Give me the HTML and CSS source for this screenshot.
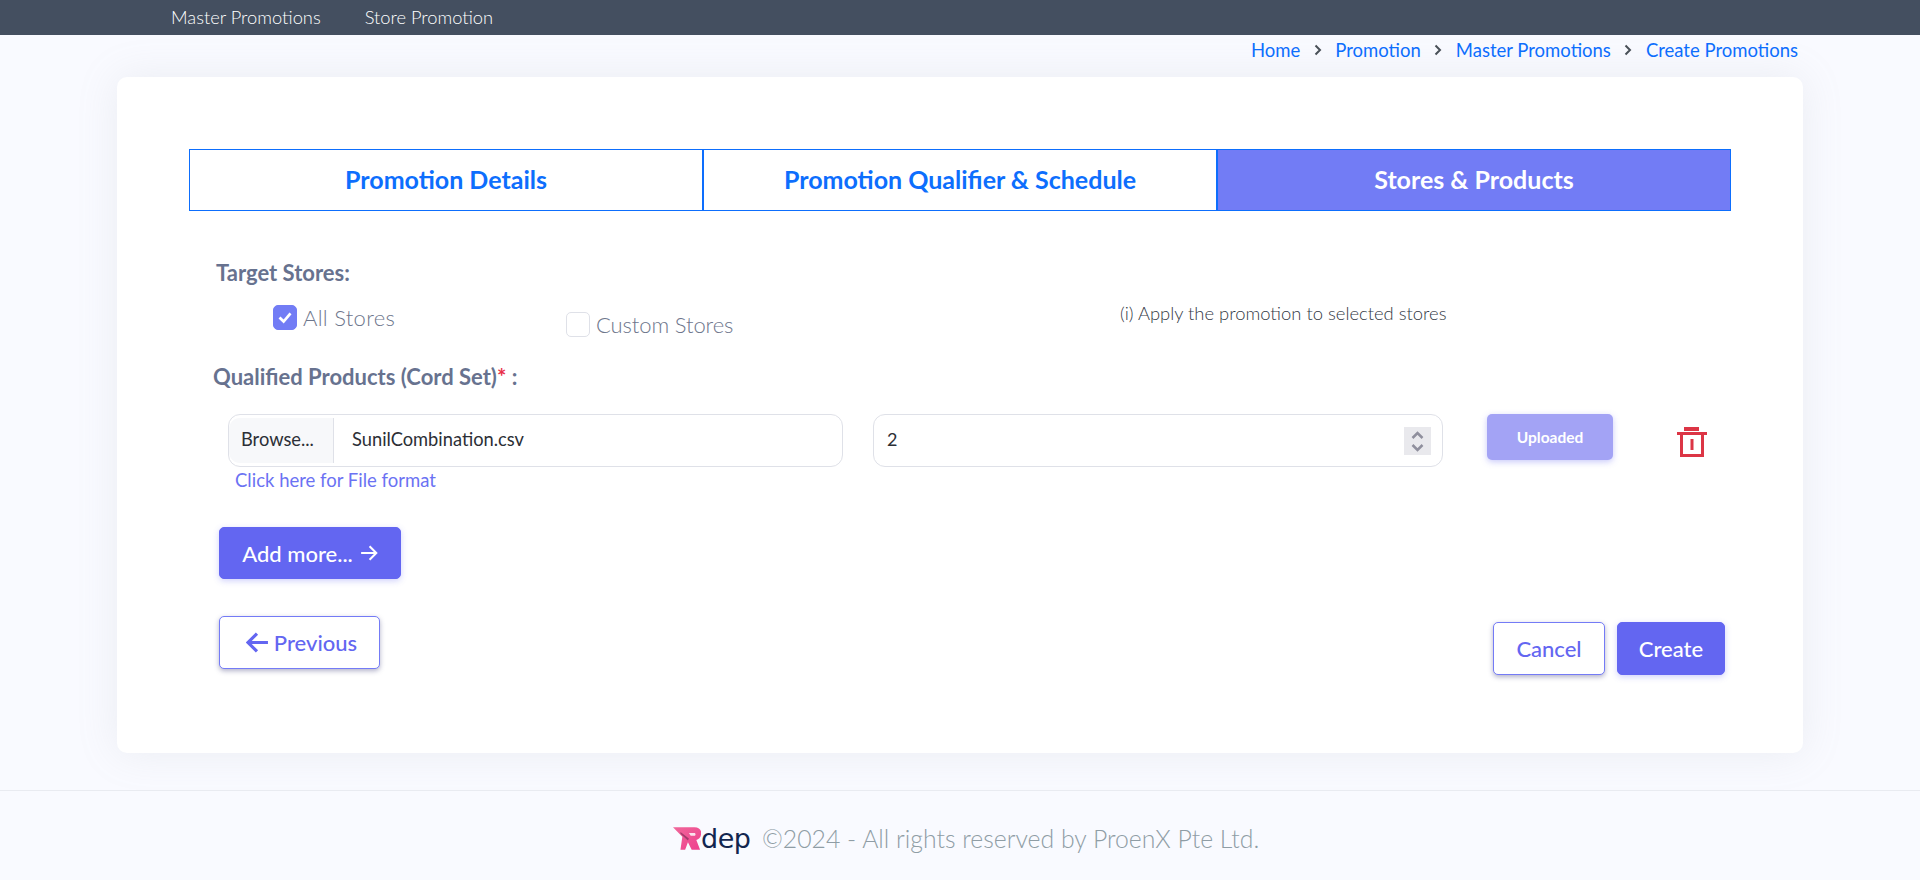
FILE: index.html
```html
<!DOCTYPE html>
<html>
  <head>
    <title>Create Promotions</title>
    <link rel="stylesheet" href="styles.css">
  </head>
  <body>
    <nav class="topnav">
      <a class="topnav-link">Master Promotions</a>
      <a class="topnav-link">Store Promotion</a>
    </nav>

    <div class="crumbs">
      <a>Home</a>
      <svg class="crumb-sep" viewBox="0 0 8 12"><path d="M1.5 1.5 6 6l-4.500 4.500"/></svg>
      <a>Promotion</a>
      <svg class="crumb-sep" viewBox="0 0 8 12"><path d="M1.5 1.5 6 6l-4.500 4.500"/></svg>
      <a>Master Promotions</a>
      <svg class="crumb-sep" viewBox="0 0 8 12"><path d="M1.5 1.5 6 6l-4.500 4.500"/></svg>
      <a>Create Promotions</a>
    </div>

    <main class="card">
      <div class="tabs">
        <div class="tab">Promotion Details</div>
        <div class="tab">Promotion Qualifier &amp; Schedule</div>
        <div class="tab tab-active">Stores &amp; Products</div>
      </div>

      <h4 class="label label-target">Target Stores:</h4>
      <div class="stores">
        <div class="store store-all">
          <span class="check check-on">
            <svg viewBox="0 0 24 24"><path d="M6 12.500 10.500 17 18 8"/></svg>
          </span>
          All Stores
        </div>
        <div class="store store-custom">
          <span class="check"></span>
          Custom Stores
        </div>
        <div class="store-info">(i) Apply the promotion to selected stores</div>
      </div>

      <h4 class="label label-products">Qualified Products (Cord Set)<span class="req">*</span> :</h4>
      <div class="upload-row">
        <div class="file-input">
          <span class="file-btn">Browse...</span>
          <span class="file-name">SunilCombination.csv</span>
        </div>
        <div class="num-input">
          <span class="num-value">2</span>
          <span class="spinner">
            <svg viewBox="0 0 27 28"><path d="M8.500 11 13.500 6l5 5M8.500 18l5 5 5-5"/></svg>
          </span>
        </div>
        <button class="btn-uploaded">Uploaded</button>
        <svg class="trash" viewBox="0 0 30 31">
          <rect x="7" y="0" width="15" height="4"/>
          <rect x="0" y="5" width="30" height="3"/>
          <rect x="13.500" y="12" width="3" height="11"/>
          <path class="trash-body" d="M4.500 8v20.500h21V8"/>
        </svg>
      </div>
      <a class="format-link">Click here for File format</a>

      <button class="btn btn-solid btn-add">
        Add more...
        <svg class="arrow-sm" viewBox="0 0 16 14"><path d="M1 7h13.500M8.500 1l6 6-6 6"/></svg>
      </button>

      <div class="form-foot">
        <button class="btn btn-line btn-prev">
          <svg class="arrow-lg" viewBox="0 0 22 20"><path d="M21 10H2M10.500 1.500 2 10l8.500 8.500"/></svg>
          Previous
        </button>
        <div class="form-actions">
          <button class="btn btn-line btn-cancel">Cancel</button>
          <button class="btn btn-solid btn-create">Create</button>
        </div>
      </div>
    </main>

    <footer class="footer">
      <span class="logo">
        <svg class="logo-mark" viewBox="0 0 30 25">
          <defs>
            <linearGradient id="logoPink" x1="0" y1="0" x2="1" y2="1">
              <stop offset="0" stop-color="#f0679a"/>
              <stop offset="1" stop-color="#ee3f8e"/>
            </linearGradient>
          </defs>
          <path fill="url(#logoPink)" d="M0 0h23c6 0 8 4 7 8-.5 3-2.500 5-5 5.500L29 24h-9l-4-8-3 8H8l2-14z"/>
          <path fill="#a23b6a" d="M8 5l9 7-1 2-8-7z"/>
          <path fill="#fbe3ee" d="M17 6h6c1.500 0 1.500 3 0 3h-4z"/>
        </svg>
        <span class="logo-text">dep</span>
      </span>
      <span class="copy">©2024 - All rights reserved by ProenX Pte Ltd.</span>
    </footer>
  </body>
</html>
```

FILE: styles.css
```css
:root {
  --primary: #6366f1;
  --link: #0d6efd;
  --label: #67728f;
  --field-line: #dfe1e8;
}

* {
  box-sizing: border-box;
}

body {
  margin: 0;
  height: 880px;
  overflow: hidden;
  background: #f9faff;
  font-family: Lato, "Open Sans", sans-serif;
}

.topnav {
  height: 35px;
  background: #444f60;
  padding: 0 0 2px 171px;
  display: flex;
  align-items: center;
  gap: 44px;
}

.topnav-link {
  color: #fff;
  font-size: 18.300px;
  font-weight: 300;
}

.crumbs {
  height: 42px;
  padding: 3px 122px 0 0;
  display: flex;
  justify-content: flex-end;
  align-items: flex-start;
  gap: 13.500px;
  color: var(--link);
  font-size: 18.500px;
  line-height: 24px;
}

.crumb-sep {
  width: 8px;
  height: 12px;
  margin-top: 6px;
  fill: none;
  stroke: #495057;
  stroke-width: 2;
}

.card {
  width: 1686px;
  height: 676px;
  margin: 0 auto 37px;
  padding: 72px 72px 78px;
  background: #fff;
  border-radius: 10px;
  box-shadow: 0 0 40px rgba(154, 161, 171, 0.15);
}

.tabs {
  display: grid;
  grid-template-columns: repeat(3, 1fr);
  height: 62px;
}

.tab {
  display: flex;
  align-items: center;
  justify-content: center;
  padding-bottom: 2px;
  border: 1px solid var(--link);
  color: var(--link);
  font-size: 25px;
  font-weight: 700;
}

.tab-active {
  background: #727cf5;
  color: #fff;
}

.label {
  margin: 0;
  color: var(--label);
  font-size: 22px;
  font-weight: 700;
  line-height: 24px;
}

.label-target {
  margin-top: 50px;
  padding-left: 27px;
}

.label-products {
  margin-top: 29px;
  padding-left: 24px;
}

.req {
  color: #e8304a;
}

.stores {
  display: flex;
  align-items: flex-start;
  margin-top: 16px;
  padding-left: 84px;
  height: 35px;
}

.store {
  display: flex;
  align-items: flex-start;
  gap: 6px;
  color: #6e768c;
  font-size: 22px;
  font-weight: 300;
  line-height: 25px;
}

.store-all {
  width: 293px;
  margin-top: 4px;
  letter-spacing: 0.300px;
}

.store-custom {
  width: 554px;
  margin-top: 11px;
  letter-spacing: -0.100px;
}

.store-info {
  color: #333945;
  font-size: 18.400px;
  font-weight: 300;
  line-height: 24px;
}

.check {
  width: 24px;
  height: 25px;
  border: 1px solid var(--field-line);
  border-radius: 5px;
  background: #fff;
  display: block;
}

.check-on {
  background: #727cf5;
  border-color: #727cf5;
}

.check svg {
  display: block;
  fill: none;
  stroke: #fff;
  stroke-width: 3;
}

.upload-row {
  display: flex;
  align-items: flex-start;
  margin-top: 25px;
  padding-left: 39px;
}

.file-input {
  width: 615px;
  height: 53px;
  display: flex;
  border: 1px solid var(--field-line);
  border-radius: 12px;
  padding: 3px 0 3px 0;
  font-size: 18.300px;
  color: #2c2f36;
}

.file-btn {
  width: 105px;
  padding: 0 0 3px 12px;
  display: flex;
  align-items: center;
  background: #f7f8fa;
  border-right: 1px solid var(--field-line);
  border-radius: 11px 0 0 11px;
}

.file-name {
  display: flex;
  align-items: center;
  padding: 0 0 3px 18px;
}

.num-input {
  width: 570px;
  height: 53px;
  margin-left: 30px;
  padding: 0 11px 0 13px;
  display: flex;
  align-items: center;
  justify-content: space-between;
  border: 1px solid var(--field-line);
  border-radius: 12px;
  font-size: 18px;
  color: #2c2f36;
}

.num-value {
  padding-bottom: 3px;
}

.spinner {
  width: 27px;
  height: 28px;
  background: #e9e9ed;
}

.spinner svg {
  display: block;
  fill: none;
  stroke: #8f8f9d;
  stroke-width: 2.500;
}

.btn-uploaded {
  width: 126px;
  height: 46px;
  margin-left: 44px;
  border: none;
  border-radius: 5px;
  background: #a3a3f5;
  color: #fff;
  font-family: inherit;
  font-size: 15.500px;
  font-weight: 700;
  box-shadow: 0 2px 6px rgba(99, 102, 241, 0.35);
}

.trash {
  width: 30px;
  height: 31px;
  margin: 13px 0 0 64px;
  fill: #dc3545;
}

.trash-body {
  fill: none;
  stroke: #dc3545;
  stroke-width: 3;
}

.format-link {
  display: block;
  margin: 3px 0 37px 46px;
  color: #6b72f3;
  font-size: 18.500px;
  line-height: 20px;
}

.btn {
  display: flex;
  align-items: center;
  justify-content: center;
  border-radius: 5px;
  font-family: inherit;
  font-size: 22px;
  font-weight: 500;
}

.btn-solid {
  background: var(--primary);
  border: 1px solid var(--primary);
  color: #fff;
  box-shadow: 0 2px 6px rgba(99, 102, 241, 0.3);
}

.btn-line {
  background: #fff;
  border: 1px solid #747bf6;
  color: var(--primary);
  box-shadow: 0 2px 5px rgba(60, 60, 120, 0.4);
}

.btn-add {
  width: 182px;
  height: 52px;
  margin-left: 30px;
  gap: 7px;
}

.arrow-sm {
  width: 18px;
  height: 16px;
  fill: none;
  stroke: #fff;
  stroke-width: 1.800;
}

.form-foot {
  display: flex;
  justify-content: space-between;
  align-items: flex-start;
  margin-top: 37px;
  padding: 0 6px 0 30px;
}

.btn-prev {
  width: 161px;
  height: 53px;
  padding-left: 10px;
  gap: 5px;
}

.arrow-lg {
  width: 23px;
  height: 21px;
  fill: none;
  stroke: var(--primary);
  stroke-width: 3;
}

.form-actions {
  display: flex;
  gap: 12px;
  margin-top: 6px;
}

.btn-cancel {
  width: 112px;
  height: 53px;
}

.btn-create {
  width: 108px;
  height: 53px;
}

.footer {
  height: 90px;
  border-top: 1px solid #e9ebf1;
  padding: 33px 0 0 673px;
  display: flex;
  align-items: flex-start;
  gap: 12px;
}

.logo {
  display: flex;
  align-items: flex-start;
  width: 77px;
  height: 26px;
  margin-top: 3px;
}

.logo-mark {
  width: 28px;
  height: 24px;
  flex: none;
}

.logo-text {
  color: #12264f;
  font-family: "DejaVu Sans", sans-serif;
  font-size: 27px;
  line-height: 24px;
  letter-spacing: -0.500px;
}

.copy {
  color: #8f9da5;
  font-size: 24.800px;
  font-weight: 300;
  line-height: 30px;
}
```
